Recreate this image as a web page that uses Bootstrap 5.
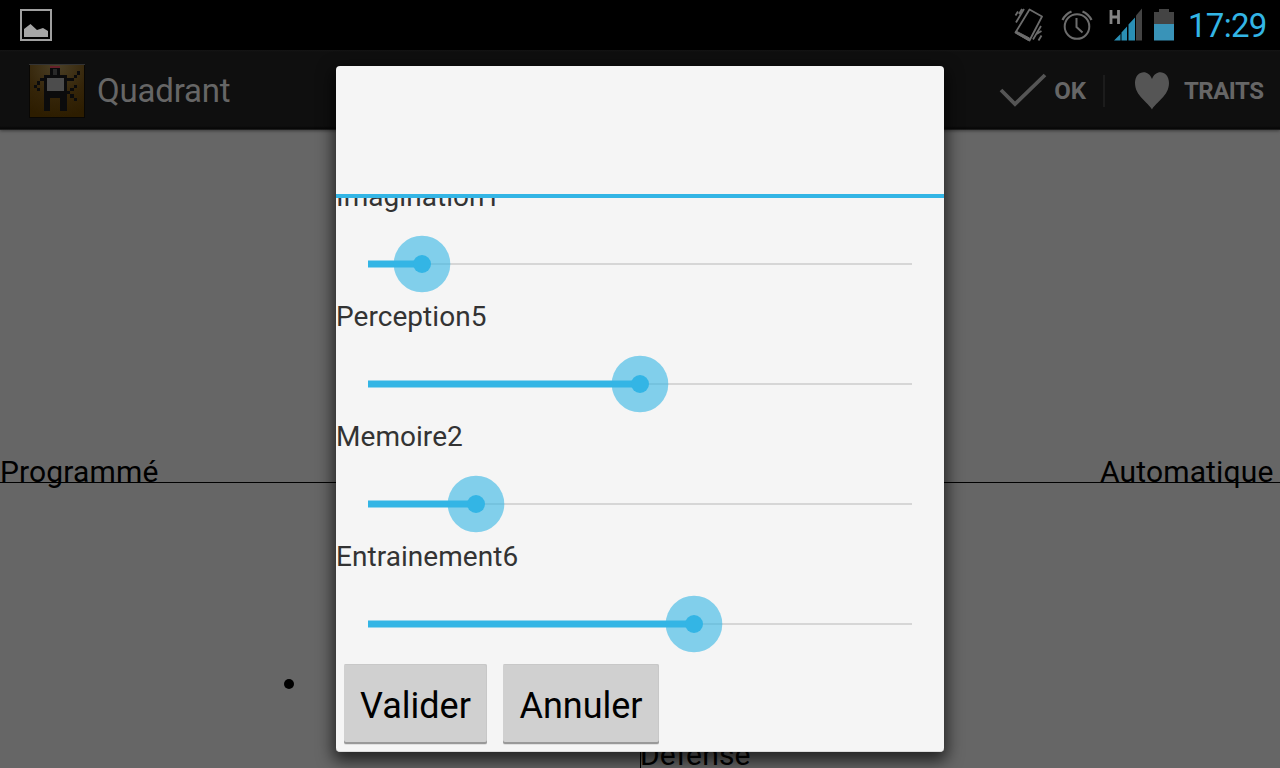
<!DOCTYPE html>
<html lang="fr">
<head>
<meta charset="utf-8">
<meta name="viewport" content="width=device-width, initial-scale=1">
<title>Quadrant</title>
<link href="https://cdn.jsdelivr.net/npm/bootstrap@5.3.0/dist/css/bootstrap.min.css" rel="stylesheet">
<style>
body{font-family:Roboto,"Liberation Sans",sans-serif;background:#666;color:#000;width:1280px;height:768px}
.status{height:50px;background:#000;padding:0 12px 0 20px}
.clock{font-size:33px;line-height:50px;padding-top:2px;margin-left:8px;width:80px;letter-spacing:-.7px;white-space:nowrap;color:#33b5e5}
.action{height:80px;background:linear-gradient(#151515 0,#0f0f0f 2px,#0f0f0f 76px,#080808 78px,#080808 79px,#333 80px);padding:1px 16px 0 29px;color:#666;box-shadow:0 1px 3px rgba(0,0,0,.4)}
.title{font-size:33px;line-height:76px;margin-left:12px;padding-top:1px;letter-spacing:-.2px}
.act{font-size:24px;font-weight:700;line-height:78px;padding-top:1px}
.act-ok{margin-left:7px}
.act-traits{width:80px;margin-left:15px;letter-spacing:-.5px;white-space:nowrap}
.sep{width:2px;height:32px;background:#1c1c1c;margin:0 30px 0 17px}
.plane text{font-size:30px;letter-spacing:.15px}
.dlg{left:336px;top:66px;width:608px;height:686px;background:#f5f5f5;border-radius:4px;box-shadow:0 6px 16px 3px rgba(0,0,0,.65);border-bottom:1px solid #ddd}
.dlg-head{height:132px;border-bottom:4px solid #33b5e5}
.dlg-list{height:458px}
.trait{height:120px;font-size:28px;line-height:38px;color:#333;letter-spacing:.05px}
.trait-name{height:38px;padding-top:2px}
.first{margin-top:-22px}
.trait svg{display:block}
.key{height:80px;font-size:36px;line-height:80px;padding:2px 0 0;background:#d0d0d0;border-radius:2px;box-shadow:inset 0 -2px #999,inset -1px 1px #c8c8c8,0 1px #e0e0e0;color:#000;border:0}
.key-ok{width:143px}
.key-cancel{width:156px}
</style>
</head>
<body class="overflow-hidden position-relative m-0">
<header class="status d-flex align-items-center justify-content-between">
  <svg width="32" height="34" viewBox="0 0 32 34"><path d="M1 2h30v30H1z" fill="none" stroke="#a0a0a0" stroke-width="2"/><path d="M4 29v-8l6.500-5 6.500 6 6-2 5 3v6z" fill="#a6a6a6"/></svg>
  <div class="d-flex align-items-center">
    <svg width="170" height="50" viewBox="1010 0 170 50" fill="none" stroke="#6c6c6c">
      <path d="M1029.500 9.500L1042 16.500L1029.500 40.500L1015.500 32.500Z" stroke-width="1.800" stroke-linejoin="round"/><path d="M1016 31l13.500 7-1 2.500-13-7.500z" fill="#6c6c6c"/>
      <path d="M1015.500 15.500l2.500-4M1016 22.500l8-13.500M1019 14l3-5M1033 39.500l8-13.500M1036.500 34l5-3M1038.500 40.500l3-5" stroke-width="1.800"/>
      <circle cx="1077" cy="26.500" r="12.300" stroke-width="2"/><path d="M1076.500 18v9l6 5.500" stroke-width="2"/><path d="M1062.500 20q3-6 9-8.500M1082.500 11.500q6 2.500 9 8.500" stroke-width="2.300"/>
      <path d="M1111 10v14M1118.500 10v14M1111 17h8" stroke="#858585" stroke-width="2.800"/>
      <g stroke="none" fill="#2a8fb5"><path d="M1114 40.500l6.500-6.500v6.500zM1121.500 40.500v-8l5.500-6v14zM1128.500 40.500v-16l6.500-7v23z"/><path d="M1136 40.500v-25l6-7v32z" fill="#444"/><path d="M1154 24V12h5V9h10v3h5v12z" fill="#444"/><path d="M1154 24h20v16.500h-20z" fill="#3993b8"/></g>
    </svg>
    <span class="clock">17:29</span>
  </div>
</header>
<nav class="action d-flex align-items-center">
  <svg width="56" height="56" viewBox="87 189 168 168" shape-rendering="crispEdges">
    <defs><radialGradient id="gold" cx=".5" cy="0" r="1"><stop offset="0" stop-color="#4b4027"/><stop offset=".6" stop-color="#352509"/><stop offset="1" stop-color="#2d1d00"/></radialGradient></defs>
    <path d="M87 192h168v162H87z" fill="#090704"/><path d="M91 195h161v156H91z" fill="url(#gold)"/><path d="M88 191h166v5H88z" fill="#333"/>
    <path d="M150 204h30v21h21v68h-69v-68h18zM132 293h18v40h-18zM180 293h21v40h-21zM120 234h12v9h-12zM111 243h9v11h-9zM102 254h9v10h-9zM111 264h9v9h-9zM201 234h21v9h-21zM222 225h9v9h-9zM231 213h9v12h-9zM201 273h9v10h-9zM210 264h12v9h-12zM222 254h9v10h-9zM210 283h12v10h-12zM222 293h9v11h-9z" fill="#0b0b0c"/>
    <path d="M141 234h51v39h-51z" fill="#4c4c4c"/><path d="M150 197h30v7h-30z" fill="#66202a"/><path d="M160 206h11v18h-11z" fill="#292929"/>
  </svg>
  <span class="title me-auto">Quadrant</span>
  <svg width="48" height="36" viewBox="0 0 48 36"><path d="M2 17l14 14L46 2" fill="none" stroke="#555" stroke-width="3.800"/></svg>
  <span class="act act-ok">OK</span>
  <span class="sep"></span>
  <svg width="34" height="38" viewBox="0 0 34 38"><path d="M17 37.500C13 30 0 24 0 11C0 -1 13 -4 17 7C21 -4 34 -1 34 11C34 24 21 30 17 37.500z" fill="#555"/></svg>
  <span class="act act-traits">TRAITS</span>
</nav>
<main>
  <svg class="plane d-block" width="1280" height="638" viewBox="0 130 1280 638">
    <path d="M0 482.500h1280M640.500 130v638" stroke="#000"/>
    <text x="0" y="482">Programmé</text><text x="1100" y="482">Automatique</text><text x="640" y="765">Defense</text>
    <circle cx="289" cy="684" r="5"/>
  </svg>
</main>
<section class="dlg position-absolute" role="dialog">
  <div class="dlg-head"></div>
  <div class="dlg-list overflow-hidden" id="traits"></div>
  <div class="d-flex px-2 gap-3 pt-2">
    <button class="key key-ok">Valider</button>
    <button class="key key-cancel">Annuler</button>
  </div>
</section>
<script>
document.getElementById('traits').innerHTML = [['Imagination',1,86],['Perception',5,304],['Memoire',2,140],['Entrainement',6,358]].map(([n,v,x],i) =>
`<div class="trait ${i ? '' : 'first'}"><div class="trait-name">${n}${v}</div><svg width="608" height="82" viewBox="0 0 608 82">
<path d="M32 50h544" stroke="#d6d6d6" stroke-width="2"/><path d="M32 50h${x-32}" stroke="#33b5e5" stroke-width="7"/>
<circle cx="${x}" cy="50" r="28.300" fill="#33b5e5" fill-opacity=".6"/><circle cx="${x}" cy="50" r="9" fill="#33b5e5"/></svg></div>`).join('');
</script>
<script src="https://cdn.jsdelivr.net/npm/bootstrap@5.3.0/dist/js/bootstrap.bundle.min.js"></script>
</body>
</html>
